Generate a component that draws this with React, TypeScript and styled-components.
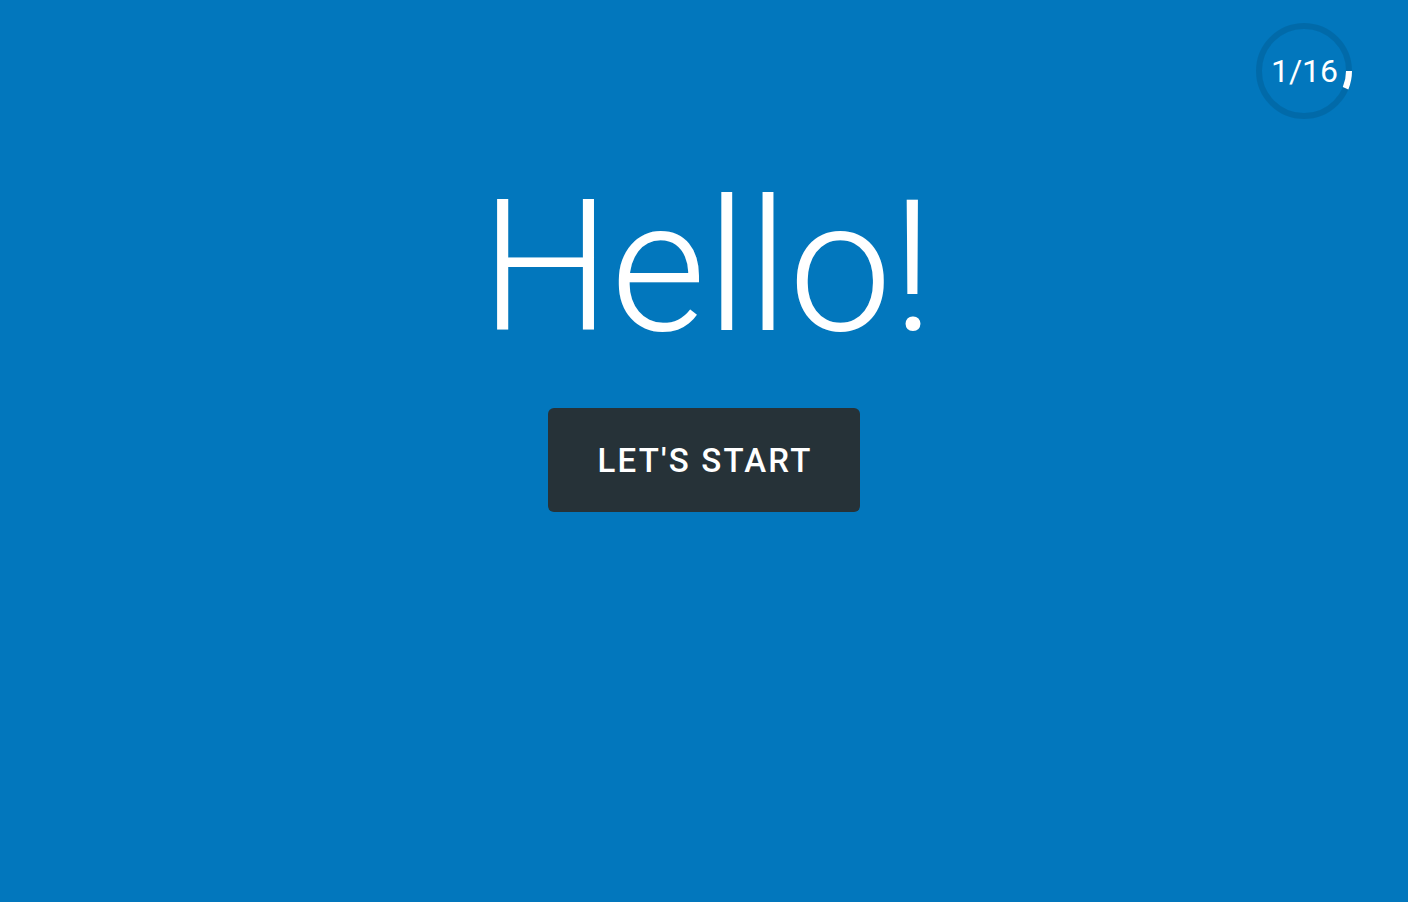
import React from "react";
import styled, { createGlobalStyle } from "styled-components";

const GlobalStyle = createGlobalStyle`
  html, body {
    margin: 0;
    padding: 0;
    background: #0277bd;
  }
  body {
    font-family: Roboto, "Liberation Sans", sans-serif;
  }
  * { box-sizing: border-box; }
`;

const Page = styled.div`
  position: relative;
  width: 100%;
  min-height: 902px;
  background: #0277bd;
  display: flex;
  flex-direction: column;
  align-items: center;
  overflow: hidden;
`;

const Title = styled.h1`
  margin: 175px 0 0;
  font-family: Roboto, "Liberation Sans", sans-serif;
  font-weight: 300;
  font-size: 184px;
  line-height: 1;
  color: #ffffff;
  letter-spacing: 0;
  transform: translateX(3px);
`;

const StartButton = styled.button`
  margin-top: 49px;
  width: 312px;
  height: 104px;
  border: none;
  border-radius: 6px;
  background: #263238;
  color: #ffffff;
  font-family: Roboto, "Liberation Sans", sans-serif;
  font-weight: 500;
  font-size: 33px;
  letter-spacing: 2.2px;
  text-transform: uppercase;
  display: flex;
  align-items: center;
  justify-content: center;
  cursor: pointer;
  padding: 0 0 0 2px;
`;

const Progress = styled.div`
  position: absolute;
  top: 23px;
  right: 56px;
  width: 96px;
  height: 96px;
  display: flex;
  align-items: center;
  justify-content: center;
`;

const Ring = styled.svg`
  position: absolute;
  inset: 0;
`;

const Counter = styled.span`
  position: relative;
  font-family: Roboto, "Liberation Sans", sans-serif;
  font-weight: 400;
  font-size: 32px;
  color: #ffffff;
  line-height: 1;
  margin-left: 1px;
`;

const ProgressRing: React.FC<{ current: number; total: number }> = ({ current, total }) => {
  const r = 45;
  const c = 2 * Math.PI * r;
  const frac = current / total;
  return (
    <Progress>
      <Ring width="96" height="96" viewBox="0 0 96 96">
        <circle cx="48" cy="48" r={r} fill="none" stroke="rgba(0,0,0,0.1)" strokeWidth="6" />
        <circle
          cx="48"
          cy="48"
          r={r}
          fill="none"
          stroke="#ffffff"
          strokeWidth="6"
          strokeDasharray={`${c * frac} ${c}`}
          strokeDashoffset={0}
        />
      </Ring>
      <Counter>
        {current}/{total}
      </Counter>
    </Progress>
  );
};

export default function App() {
  return (
    <Page>
      <GlobalStyle />
      <ProgressRing current={1} total={16} />
      <Title>Hello!</Title>
      <StartButton>Let's Start</StartButton>
    </Page>
  );
}
